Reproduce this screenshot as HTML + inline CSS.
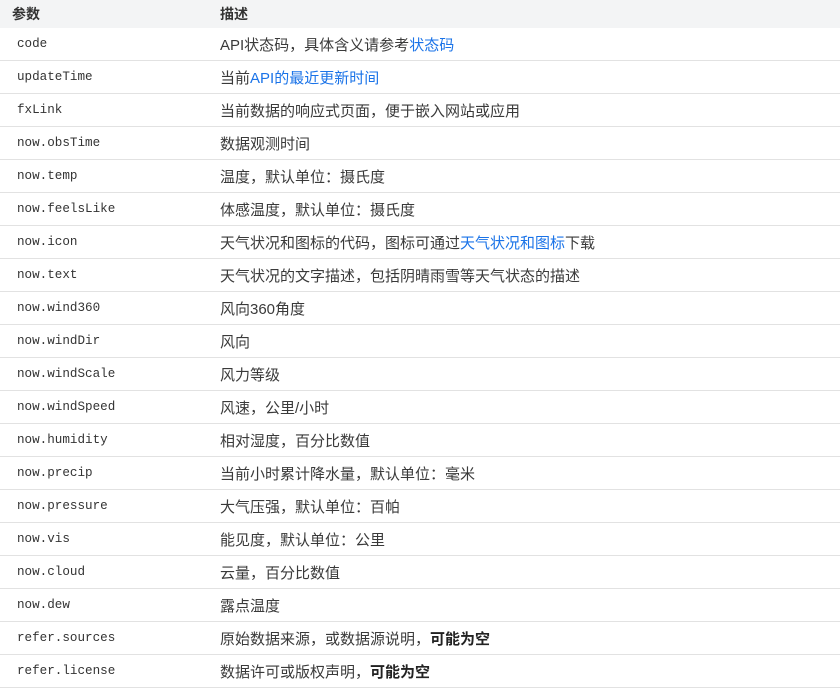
<!DOCTYPE html><html><head><meta charset="utf-8"><style>
body{margin:0;background:#fff;width:840px;height:694px;overflow:hidden;font-family:"Liberation Sans","Noto Sans CJK SC",sans-serif;color:#3a3a3a}
table{border-collapse:collapse;width:840px;table-layout:fixed}
th{background:#f3f4f5;height:28px;text-align:left;font-size:14px;font-weight:bold;padding:0 0 0 12px;color:#333}
td{height:32px;border-bottom:1px solid #e2e2e2;font-size:15px;padding:0}
td:first-child{font-family:"Liberation Mono",monospace;font-size:12.6px;padding-left:17px;color:#333}
a{color:#1a73e8;text-decoration:none}
b{color:#222}
</style></head><body><table>
<tr><th style="width:208px">参数</th><th style="padding-left:0">描述</th></tr>
<tr><td>code</td><td>API状态码，具体含义请参考<a>状态码</a></td></tr>
<tr><td>updateTime</td><td>当前<a>API的最近更新时间</a></td></tr>
<tr><td>fxLink</td><td>当前数据的响应式页面，便于嵌入网站或应用</td></tr>
<tr><td>now.obsTime</td><td>数据观测时间</td></tr>
<tr><td>now.temp</td><td>温度，默认单位：摄氏度</td></tr>
<tr><td>now.feelsLike</td><td>体感温度，默认单位：摄氏度</td></tr>
<tr><td>now.icon</td><td>天气状况和图标的代码，图标可通过<a>天气状况和图标</a>下载</td></tr>
<tr><td>now.text</td><td>天气状况的文字描述，包括阴晴雨雪等天气状态的描述</td></tr>
<tr><td>now.wind360</td><td>风向360角度</td></tr>
<tr><td>now.windDir</td><td>风向</td></tr>
<tr><td>now.windScale</td><td>风力等级</td></tr>
<tr><td>now.windSpeed</td><td>风速，公里/小时</td></tr>
<tr><td>now.humidity</td><td>相对湿度，百分比数值</td></tr>
<tr><td>now.precip</td><td>当前小时累计降水量，默认单位：毫米</td></tr>
<tr><td>now.pressure</td><td>大气压强，默认单位：百帕</td></tr>
<tr><td>now.vis</td><td>能见度，默认单位：公里</td></tr>
<tr><td>now.cloud</td><td>云量，百分比数值</td></tr>
<tr><td>now.dew</td><td>露点温度</td></tr>
<tr><td>refer.sources</td><td>原始数据来源，或数据源说明，<b>可能为空</b></td></tr>
<tr><td>refer.license</td><td>数据许可或版权声明，<b>可能为空</b></td></tr>
</table></body></html>
